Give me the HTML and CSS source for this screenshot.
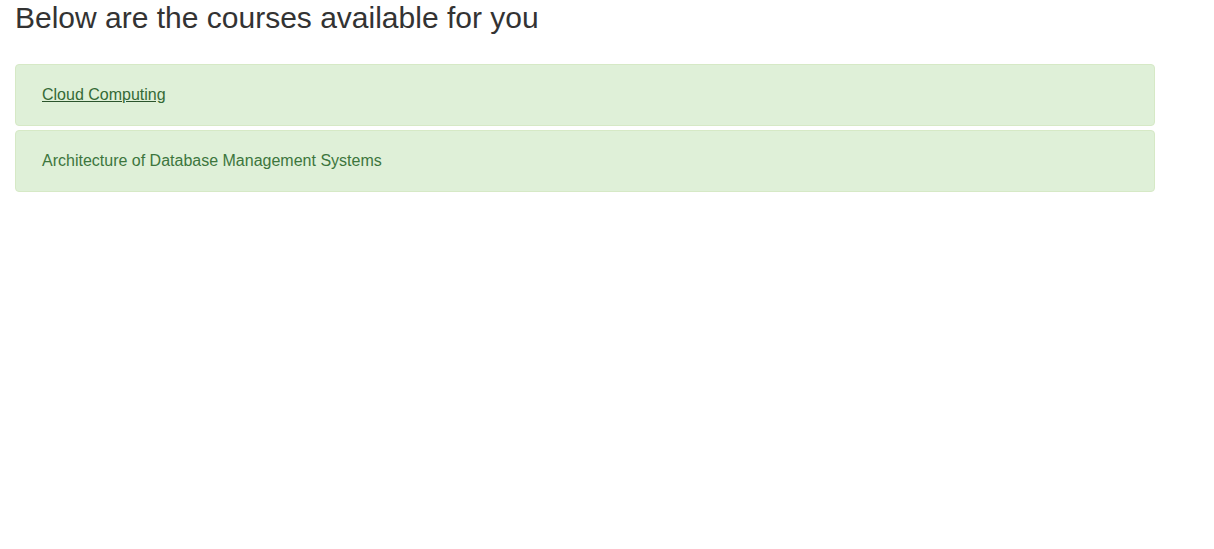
FILE: index.html
```html
<!DOCTYPE html>
<html>
<head>
<meta charset="utf-8">
<link rel="stylesheet" href="styles.css">
</head>
<body>
<div class="container">
  <h2 class="title">Below are the courses available for you</h2>
  <div class="courses">
    <div class="alert"><a class="course-link" href="#">Cloud Computing</a></div>
    <div class="alert">Architecture of Database Management Systems</div>
  </div>
</div>
</body>
</html>
```
FILE: styles.css
```css
html, body {
  margin: 0;
  padding: 0;
  background: #fff;
}
body {
  font-family: "Liberation Sans", Arial, sans-serif;
  color: #333;
}
.container {
  width: 1140px;
  padding: 0 15px;
}
.title {
  margin: 1px 0 30px;
  font-size: 30px;
  font-weight: 400;
  line-height: 33px;
  color: #333;
}
.courses {
  display: flex;
  flex-direction: column;
  gap: 4px;
}
.alert {
  background: #dff0d8;
  border: 1px solid #d6e9c6;
  border-radius: 4px;
  color: #3c763d;
  font-size: 16px;
  line-height: 20px;
  padding: 20px 26px;
}
.course-link {
  color: #356a36;
  text-decoration: underline;
  text-decoration-color: #2b542c;
}
```
